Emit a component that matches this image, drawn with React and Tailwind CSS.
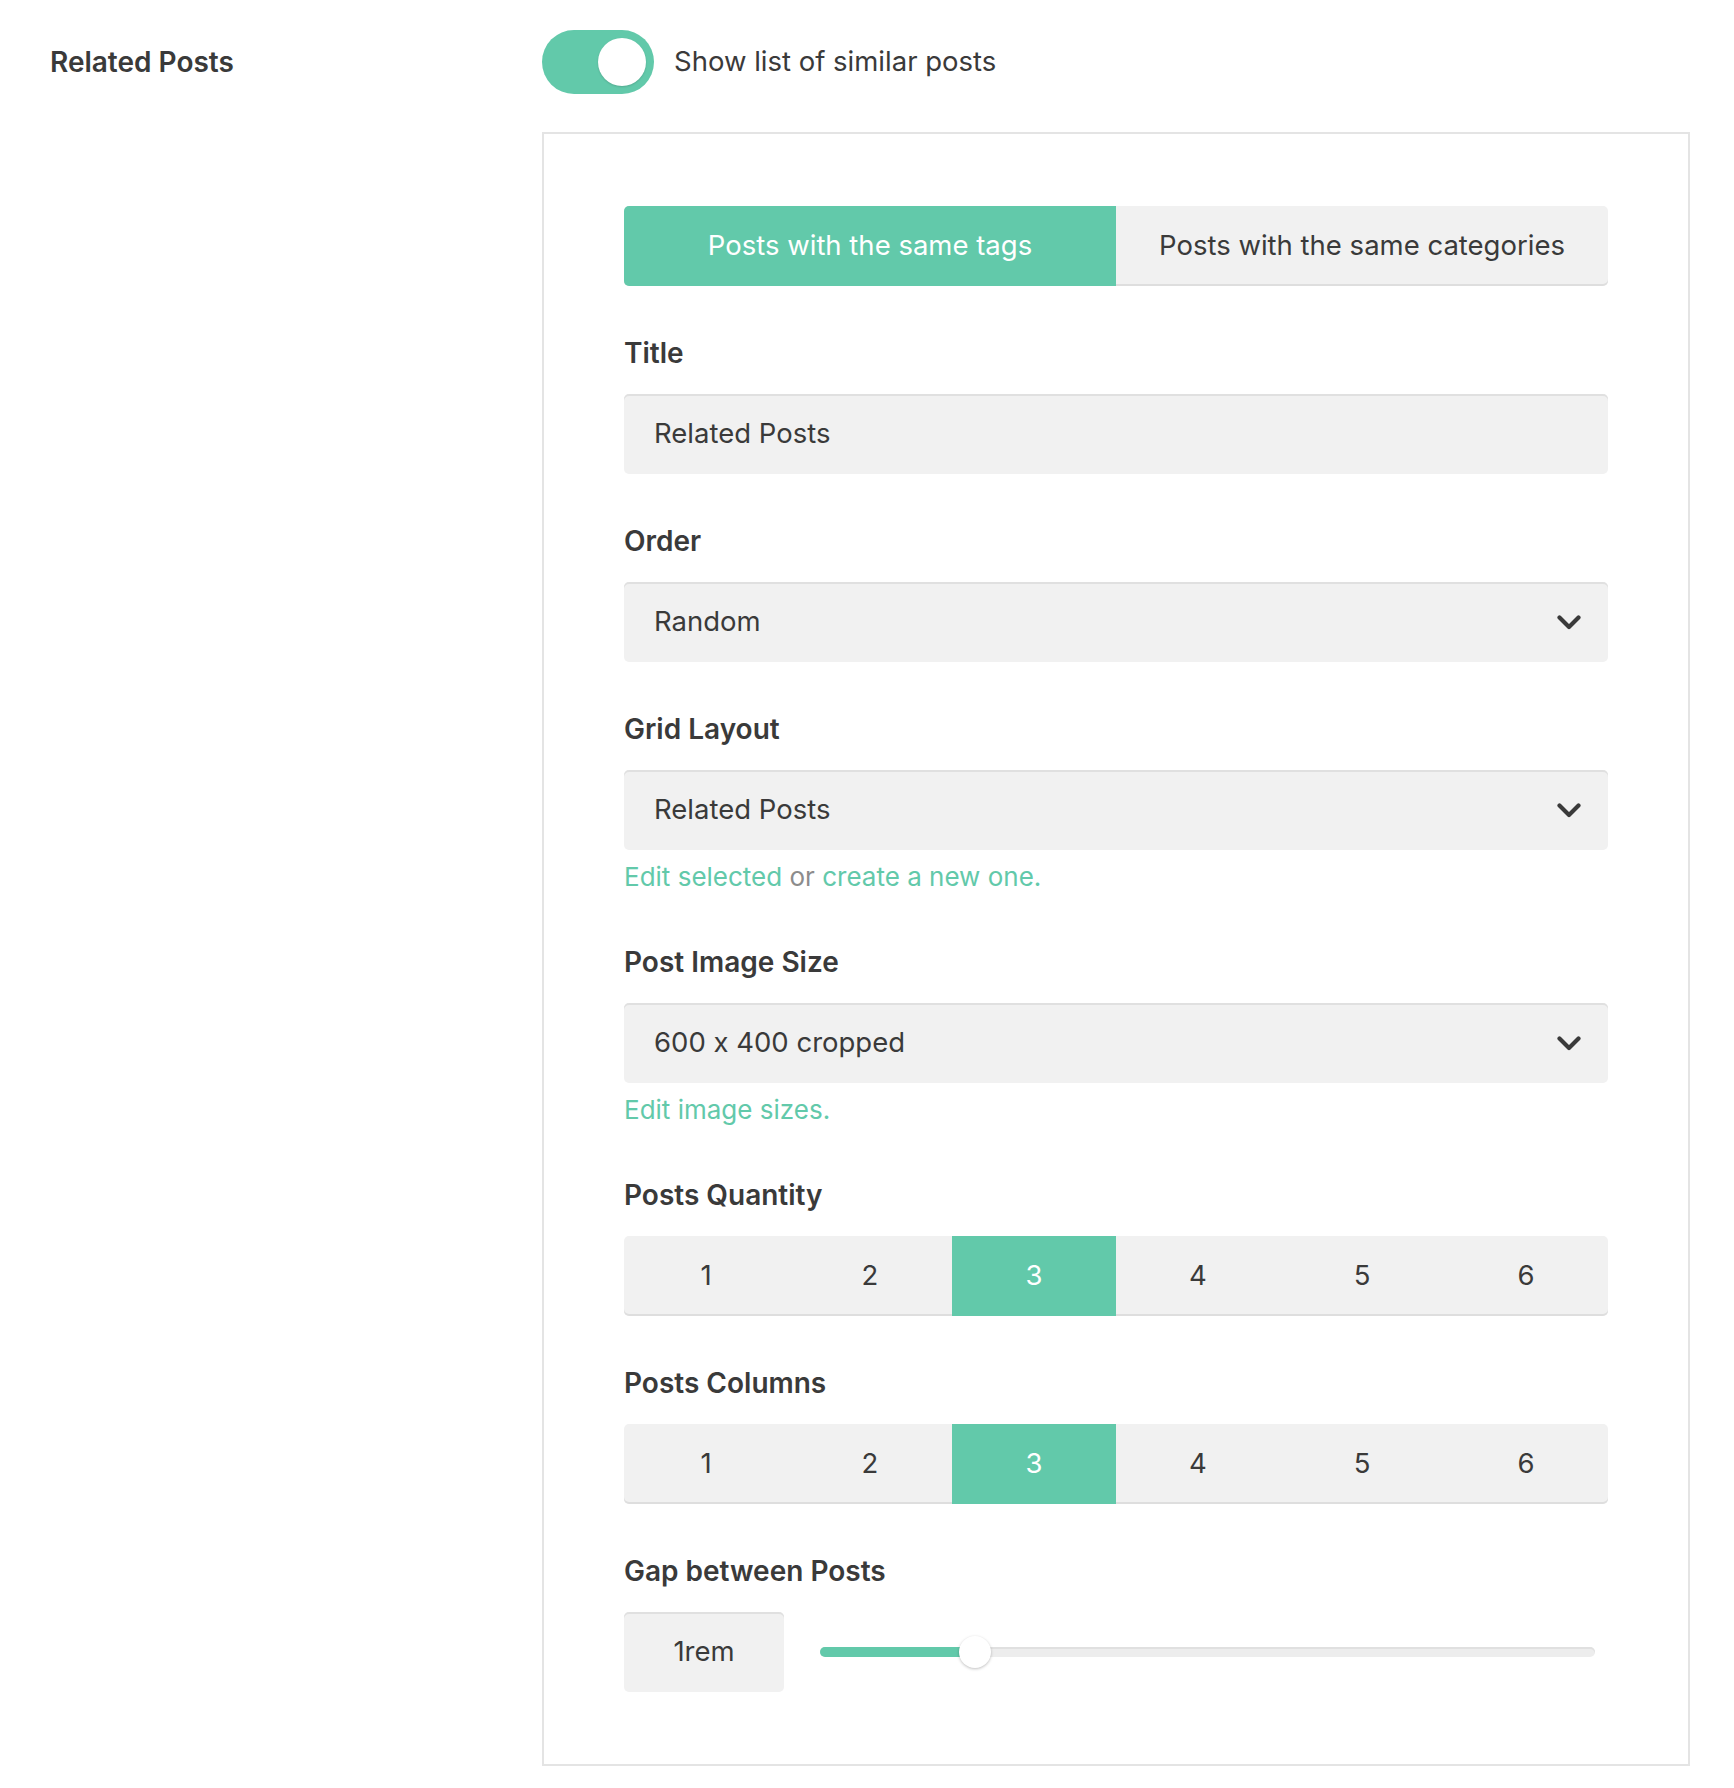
import { useState } from 'react';

const GREEN = 'bg-[#62c9aa]';

function Chevron() {
  return (
    <svg width="24" height="15" viewBox="0 0 24 15" className="shrink-0">
      <path d="M2.5 2.5 L12 12 L21.5 2.5" fill="none" stroke="#3a3a3a" strokeWidth="4.2" strokeLinecap="round" strokeLinejoin="round" />
    </svg>
  );
}

function Label({ children }) {
  return <div className="text-[28px] leading-[36px] font-semibold text-[#3a3a3a] mb-[23px]">{children}</div>;
}

function Field({ label, children, help }) {
  return (
    <div className="mt-[49px]">
      <Label>{label}</Label>
      {children}
      {help && <div className="mt-[9px] text-[26px] leading-[36px]">{help}</div>}
    </div>
  );
}

function Select({ value }) {
  return (
    <div className="h-[80px] rounded-[5px] bg-[#f1f1f1] shadow-[inset_0_2px_0_#e0e0e0] flex items-center justify-between pl-[30px] pr-[27px] text-[27.5px] text-[#3a3a3a]">
      <span>{value}</span>
      <Chevron />
    </div>
  );
}

function Segmented({ value, onChange }) {
  return (
    <div className="grid grid-cols-6 h-[80px] rounded-[5px] overflow-hidden bg-[#f1f1f1] shadow-[inset_0_-2px_0_#dedede]">
      {[1, 2, 3, 4, 5, 6].map((n) => (
        <button
          key={n}
          onClick={() => onChange(n)}
          className={`flex items-center justify-center text-[27.5px] ${
            value === n ? 'bg-[#62c9aa] text-white' : 'text-[#3a3a3a]'
          }`}
        >
          {n}
        </button>
      ))}
    </div>
  );
}

export default function App() {
  const [enabled, setEnabled] = useState(true);
  const [tab, setTab] = useState('tags');
  const [qty, setQty] = useState(3);
  const [cols, setCols] = useState(3);

  return (
    <div className="min-h-screen bg-white font-['Inter',sans-serif] [font-feature-settings:'calt'_0] text-[#3a3a3a]">
      <div className="flex pt-[30px] pl-[50px] pr-[44px] pb-[24px]">
        {/* Left label */}
        <div className="w-[492px] shrink-0 h-[64px] flex items-center text-[28px] font-semibold">Related Posts</div>

        <div className="flex-1">
          {/* Toggle */}
          <div className="flex items-center gap-[20px] h-[64px]">
            <button
              onClick={() => setEnabled(!enabled)}
              className={`relative w-[112px] h-[64px] rounded-full ${enabled ? GREEN : 'bg-[#d6d6d6]'}`}
            >
              <span
                className={`absolute top-[8px] w-[48px] h-[48px] rounded-full bg-white shadow-[0_1px_2px_rgba(0,0,0,0.15)] ${
                  enabled ? 'right-[8px]' : 'left-[8px]'
                }`}
              />
            </button>
            <span className="text-[27.5px]">Show list of similar posts</span>
          </div>

          {/* Panel */}
          <div className="mt-[38px] border-2 border-[#e4e4e4] px-[80px] pt-[72px] pb-[72px]">
            <div className="grid grid-cols-2 h-[80px] rounded-[5px] overflow-hidden bg-[#f1f1f1] shadow-[inset_0_-2px_0_#dedede] text-[27.5px]">
              <button
                onClick={() => setTab('tags')}
                className={tab === 'tags' ? 'bg-[#62c9aa] text-white' : 'text-[#3a3a3a]'}
              >
                Posts with the same tags
              </button>
              <button
                onClick={() => setTab('categories')}
                className={tab === 'categories' ? 'bg-[#62c9aa] text-white' : 'text-[#3a3a3a]'}
              >
                Posts with the same categories
              </button>
            </div>

            <Field label="Title">
              <div className="h-[80px] rounded-[5px] bg-[#f1f1f1] shadow-[inset_0_2px_0_#e0e0e0] flex items-center pl-[30px] text-[27.5px]">
                Related Posts
              </div>
            </Field>

            <Field label="Order">
              <Select value="Random" />
            </Field>

            <Field
              label="Grid Layout"
              help={
                <>
                  <span className="text-[#62c9aa]">Edit selected</span>
                  <span className="text-[#8c8c8c]"> or </span>
                  <span className="text-[#62c9aa]">create a new one.</span>
                </>
              }
            >
              <Select value="Related Posts" />
            </Field>

            <Field label="Post Image Size" help={<span className="text-[#62c9aa]">Edit image sizes.</span>}>
              <Select value="600 x 400 cropped" />
            </Field>

            <Field label="Posts Quantity">
              <Segmented value={qty} onChange={setQty} />
            </Field>

            <Field label="Posts Columns">
              <Segmented value={cols} onChange={setCols} />
            </Field>

            <Field label="Gap between Posts">
              <div className="flex items-center gap-[36px]">
                <div className="w-[160px] h-[80px] shrink-0 rounded-[5px] bg-[#f1f1f1] shadow-[inset_0_2px_0_#e0e0e0] flex items-center justify-center text-[27.5px]">
                  1rem
                </div>
                <div className="relative flex-1 mr-[13px] h-[10px] rounded-full bg-[#ededed] shadow-[inset_0_2px_0_#e0e0e0]">
                  <div className="absolute left-0 top-0 h-[10px] rounded-full bg-[#62c9aa]" style={{ width: '20%' }} />
                  <div
                    className="absolute top-1/2 w-[32px] h-[32px] -translate-x-1/2 -translate-y-1/2 rounded-full bg-white shadow-[0_1px_3px_rgba(0,0,0,0.25)]"
                    style={{ left: '20%' }}
                  />
                </div>
              </div>
            </Field>
          </div>
        </div>
      </div>
    </div>
  );
}
